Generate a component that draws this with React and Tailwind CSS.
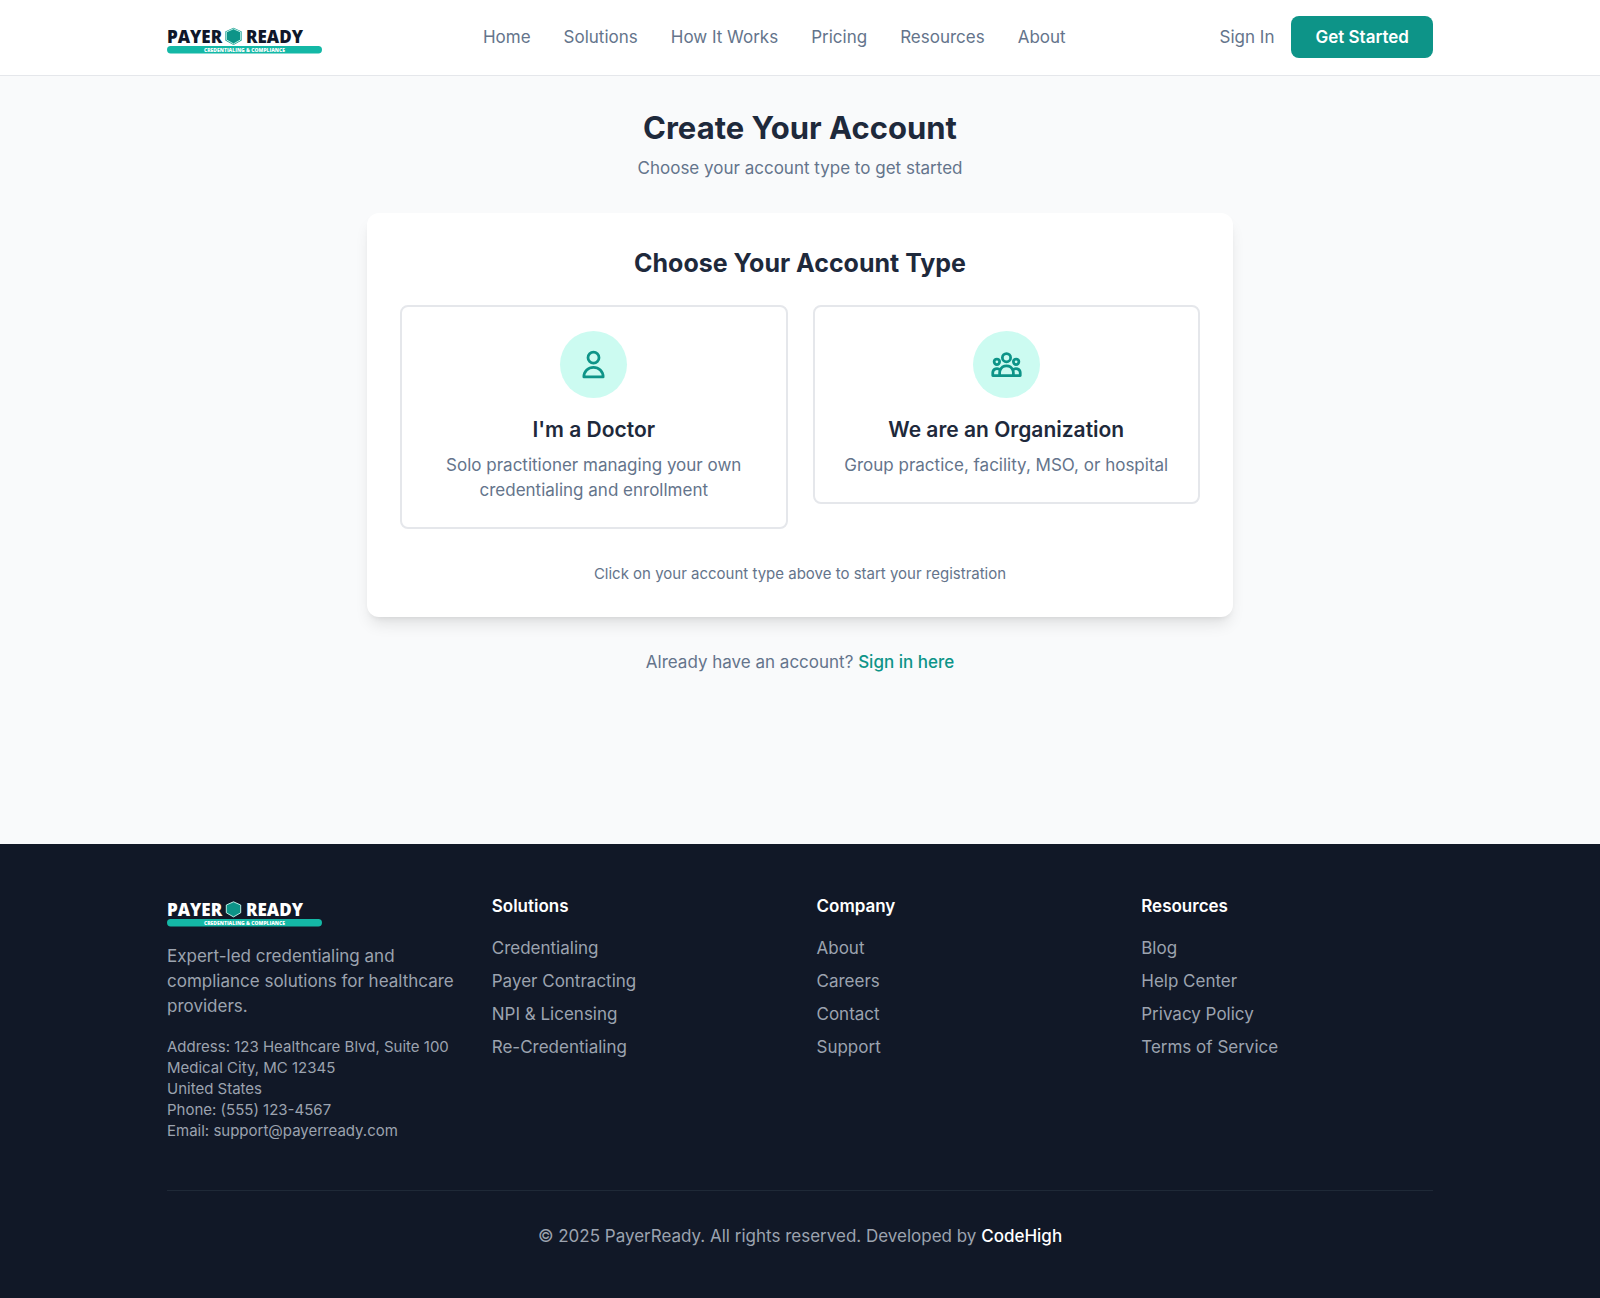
import React from "react";

const navLinks = ["Home", "Solutions", "How It Works", "Pricing", "Resources", "About"];

const accountTypes = [
  {
    title: "I'm a Doctor",
    text: "Solo practitioner managing your own credentialing and enrollment",
    icon: "M16 7a4 4 0 11-8 0 4 4 0 018 0zM12 14a7 7 0 00-7 7h14a7 7 0 00-7-7z",
  },
  {
    title: "We are an Organization",
    text: "Group practice, facility, MSO, or hospital",
    icon: "M17 20h5v-2a3 3 0 00-5.356-1.857M17 20H7m10 0v-2c0-.656-.126-1.283-.356-1.857M7 20H2v-2a3 3 0 015.356-1.857M7 20v-2c0-.656.126-1.283.356-1.857m0 0a5.002 5.002 0 019.288 0M15 7a3 3 0 11-6 0 3 3 0 016 0zm6 3a2 2 0 11-4 0 2 2 0 014 0zM7 10a2 2 0 11-4 0 2 2 0 014 0z",
  },
];

const footerColumns = [
  { title: "Solutions", links: ["Credentialing", "Payer Contracting", "NPI & Licensing", "Re-Credentialing"] },
  { title: "Company", links: ["About", "Careers", "Contact", "Support"] },
  { title: "Resources", links: ["Blog", "Help Center", "Privacy Policy", "Terms of Service"] },
];

function Logo({ dark = false }) {
  const ink = dark ? "#ffffff" : "#0f172a";
  return (
    <svg
      width="162"
      height="33"
      viewBox="0 0 162 33"
      role="img"
      aria-label="Payer Ready, Credentialing & Compliance"
      className="block font-['Open_Sans',sans-serif]"
    >
      <text x="0" y="22" fontSize="17" fontWeight="800" fill={ink}>PAYER</text>
      <path d="M66.5 6.8l8.2 3.6v9L66.5 24l-8.2-4.6v-9z" fill={dark ? "#111827" : "#0d9488"} />
      <path d="M66.5 7.8l7.2 3.2v7.8l-7.2 4.1-7.2-4.1V11z" fill="#0d9488" stroke="#ccfbf1" strokeWidth="0.9" />
      <text x="79" y="22" fontSize="17" fontWeight="800" fill={ink}>READY</text>
      <rect x="0" y="25" width="155" height="7.4" rx="3.7" fill="#14b8a6" />
      <text x="77.5" y="30.6" fontSize="5" fontWeight="800" fill="#ffffff" textAnchor="middle">
        CREDENTIALING &amp; COMPLIANCE
      </text>
    </svg>
  );
}

function Header() {
  return (
    <header className="border-b border-[#e5e7eb] bg-white">
      <div className="mx-auto flex max-w-[1332px] items-center justify-between px-[33px] pt-4 pb-[17px]">
        <a href="#home"><Logo /></a>
        <nav className="flex gap-[33px] text-[#64748b]">
          {navLinks.map((label) => (
            <a key={label} href="#nav">{label}</a>
          ))}
        </nav>
        <div className="flex items-center gap-[17px]">
          <a href="#signin" className="text-[#64748b]">Sign In</a>
          <button type="button" className="h-[42px] rounded-lg bg-[#0d9488] px-6 font-semibold text-white">
            Get Started
          </button>
        </div>
      </div>
    </header>
  );
}

function AccountCard({ title, text, icon }) {
  return (
    <button type="button" className="rounded-lg border-2 border-[#e5e7eb] p-6 text-center">
      <span className="mx-auto mb-[17px] flex size-[67px] items-center justify-center rounded-full bg-[#ccfbf1]">
        <svg className="size-[33px]" viewBox="0 0 24 24" fill="none" stroke="#0d9488" strokeWidth="2" strokeLinecap="round" strokeLinejoin="round" aria-hidden="true">
          <path d={icon} />
        </svg>
      </span>
      <span className="mb-[9px] block text-[21px] leading-[29px] font-semibold text-[#1e293b]">{title}</span>
      <span className="block text-[#64748b]">{text}</span>
    </button>
  );
}

function Footer() {
  return (
    <footer className="bg-[#111827] text-[#9ca3af]">
      <div className="mx-auto max-w-[1332px] px-[33px] pt-[50px] pb-[49px]">
        <div className="mb-[49px] grid grid-cols-4 gap-[33px]">
          <div>
            <Logo dark />
            <p className="mt-[17px] mb-[17px]">Expert-led credentialing and compliance solutions for healthcare providers.</p>
            <address className="text-[15px] leading-[21px] not-italic">
              <p>Address: 123 Healthcare Blvd, Suite 100</p>
              <p>Medical City, MC 12345</p>
              <p>United States</p>
              <p>Phone: (555) 123-4567</p>
              <p>Email: support@payerready.com</p>
            </address>
          </div>
          {footerColumns.map((column) => (
            <div key={column.title}>
              <h3 className="mb-[17px] font-semibold text-white">{column.title}</h3>
              <ul className="flex flex-col gap-2">
                {column.links.map((label) => (
                  <li key={label}><a href="#footer">{label}</a></li>
                ))}
              </ul>
            </div>
          ))}
        </div>
        <div className="border-t border-[#1f2937] pt-[33px] text-center">
          <p>
            © 2025 PayerReady. All rights reserved. Developed by{" "}
            <a href="#codehigh" className="font-medium text-white">CodeHigh</a>
          </p>
        </div>
      </div>
    </footer>
  );
}

export default function App() {
  return (
    <div className="flex min-h-screen flex-col bg-[#f9fafb] font-['Inter',sans-serif] text-[17px] leading-[25px]">
      <Header />
      <main className="mx-auto w-full max-w-[932px] flex-1 px-[33px] py-[33px] text-center">
        <h1 className="mb-[9px] text-[31px] leading-[38px] font-bold text-[#1e293b]">Create Your Account</h1>
        <p className="mb-8 text-[#64748b]">Choose your account type to get started</p>
        <section className="rounded-xl bg-white p-[33px] shadow-lg">
          <h2 className="mb-[25px] text-[25px] leading-[34px] font-bold text-[#1e293b]">Choose Your Account Type</h2>
          <div className="grid grid-cols-2 items-start gap-[25px]">
            {accountTypes.map((type) => (
              <AccountCard key={type.title} {...type} />
            ))}
          </div>
          <p className="mt-[34px] text-[15px] leading-[21px] text-[#64748b]">
            Click on your account type above to start your registration
          </p>
        </section>
        <p className="mt-[33px] text-[#64748b]">
          Already have an account?{" "}
          <a href="#signin" className="font-medium text-[#0d9488]">Sign in here</a>
        </p>
      </main>
      <Footer />
    </div>
  );
}
